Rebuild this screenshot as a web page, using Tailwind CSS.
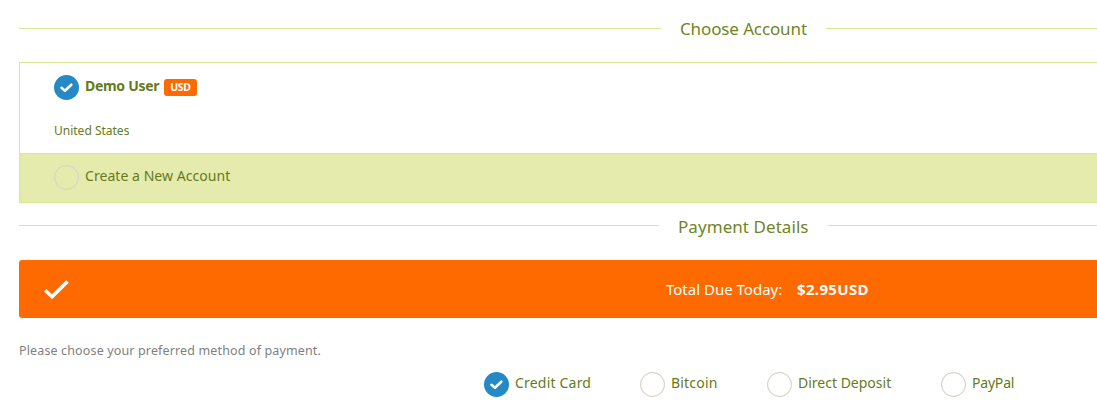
<!DOCTYPE html>
<html lang="en">
<head>
<meta charset="utf-8">
<title>Checkout</title>
<script src="https://cdn.jsdelivr.net/npm/@tailwindcss/browser@4"></script>
</head>
<body class="h-[405px] w-full overflow-hidden bg-white font-['Trebuchet_MS','Noto_Sans',sans-serif] text-[#667a1c]">
<svg class="hidden">
  <symbol id="on" viewBox="0 0 25 25"><circle cx="12.5" cy="12.5" r="12.5" fill="#2489c5"/><path d="M7.5 12.8L11 15.8L17.3 9.7" fill="none" stroke="#fff" stroke-width="2.6" stroke-linecap="round" stroke-linejoin="round"/></symbol>
  <symbol id="off" viewBox="0 0 25 25"><circle cx="12.5" cy="12.5" r="11.9" fill="none" stroke="#d9d5cc" stroke-width="1.2"/></symbol>
</svg>
<main class="ml-[19px] overflow-hidden whitespace-nowrap">
  <div class="flex h-[62px] items-start pt-[17px]">
    <div class="mt-[11px] h-px w-[642px] bg-[#dbe68e]"></div>
    <h2 class="ml-[19px] w-[146px] text-[17px] leading-6 tracking-[-0.12px] text-[#718425]">Choose Account</h2>
    <div class="mt-[11px] h-px flex-1 bg-[#dbe68e]"></div>
  </div>
  <section class="h-[141px] border border-r-0 border-[#dbe68e]">
    <div class="h-[90px] pl-[34px] pt-3">
      <div class="flex h-[25px]">
        <svg class="size-[25px]"><use href="#on"/></svg>
        <b class="ml-1.5 w-[79px] text-[14px] leading-[22px] tracking-[-0.3px]">Demo User</b>
        <b class="mt-1 flex h-[17px] w-[33px] justify-center rounded-[3px] bg-[#ff6a00] text-[10.5px] leading-[17px] tracking-[-0.3px] text-white">USD</b>
      </div>
      <p class="mt-[22px] text-[12px] leading-[18px]">United States</p>
    </div>
    <div class="flex h-[49px] border-t border-[#dbe68e] bg-[#e5ebac] pl-[34px] pt-[11px]">
      <svg class="size-[25px]"><use href="#off"/></svg>
      <p class="ml-1.5 text-[14px] leading-[22px] tracking-[0.05px]">Create a New Account</p>
    </div>
  </section>
  <div class="flex h-[57px] items-start pt-3">
    <div class="mt-[10px] h-px w-[640px] bg-[#dbe68e]"></div>
    <h2 class="ml-[19px] w-[150px] text-[17px] leading-6 tracking-[0.06px] text-[#718425]">Payment Details</h2>
    <div class="mt-[10px] h-px flex-1 bg-[#dbe68e]"></div>
  </div>
  <div class="flex h-[58px] rounded-l-[3px] bg-[#ff6a00] text-[15px] leading-[58px] text-white">
    <svg class="ml-[25px] mt-5 h-5 w-[25px]" viewBox="0 0 25 20"><path d="M1.2 10.2L8 16.7L23.5 1.5" fill="none" stroke="#fff" stroke-width="3.6"/></svg>
    <p class="ml-[597px] w-[131px]">Total Due Today:</p>
    <b class="tracking-[0.35px]">$2.95USD</b>
  </div>
  <p class="mt-[23px] text-[12.5px] leading-5 tracking-[0.14px] text-[#808080]">Please choose your preferred method of payment.</p>
  <div class="ml-[465px] mt-[11px] flex text-[14px] leading-[22px]">
    <div class="flex w-[156px] gap-1.5"><svg class="size-[25px]"><use href="#on"/></svg><span class="tracking-[0.2px]">Credit Card</span></div>
    <div class="flex w-[127px] gap-1.5"><svg class="size-[25px]"><use href="#off"/></svg><span class="tracking-[0.2px]">Bitcoin</span></div>
    <div class="flex w-[174px] gap-1.5"><svg class="size-[25px]"><use href="#off"/></svg><span>Direct Deposit</span></div>
    <div class="flex gap-1.5"><svg class="size-[25px]"><use href="#off"/></svg><span class="tracking-[-0.2px]">PayPal</span></div>
  </div>
</main>
</body>
</html>
